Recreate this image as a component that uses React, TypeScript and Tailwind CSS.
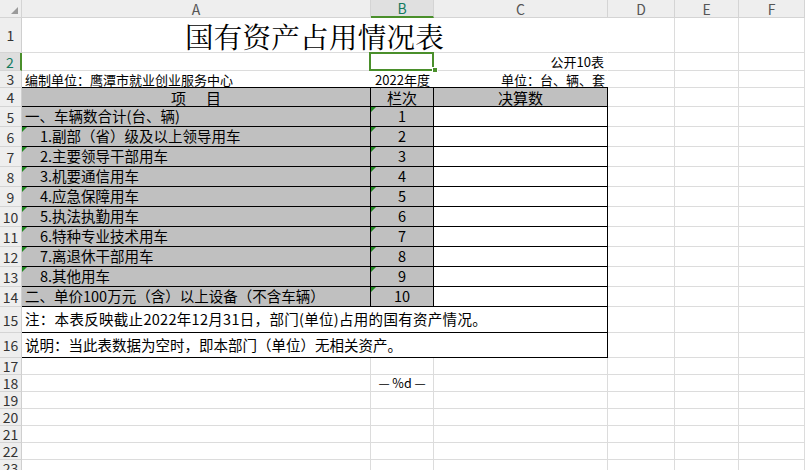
import React from "react";

const FONT = { fontFamily: '"Noto Sans CJK SC", "Liberation Sans", sans-serif' };
const SERIF = { fontFamily: '"Noto Serif CJK SC", "Noto Sans CJK SC", serif' };

const GRID = "border-r border-b border-[#dcdcdc]";
const BLACK = "border-r border-b border-black";

function Tri() {
  return (
    <span className="absolute left-0 top-0 w-0 h-0 border-t-[5px] border-r-[5px] border-t-[#1f8a1f] border-r-transparent" />
  );
}

function RowHead({ n, active }: { n: number; active?: boolean }) {
  return (
    <div
      className={`flex items-center justify-center text-[14px] leading-none border-b border-[#d4d4d4] ${
        active
          ? "bg-[#dedede] text-[#137a5e] border-r-2 border-r-[#4a8f2b]"
          : "bg-[#eeeeee] text-[#333] border-r border-r-[#cfcfcf]"
      }`}
    >
      {n}
    </div>
  );
}

function Blank() {
  return <div className={`bg-white ${GRID}`} />;
}

const items = [
  { t: "一、车辆数合计(台、辆)", n: "1", tri: false, indent: false },
  { t: "1.副部（省）级及以上领导用车", n: "2", tri: true, indent: true },
  { t: "2.主要领导干部用车", n: "3", tri: true, indent: true },
  { t: "3.机要通信用车", n: "4", tri: true, indent: true },
  { t: "4.应急保障用车", n: "5", tri: true, indent: true },
  { t: "5.执法执勤用车", n: "6", tri: true, indent: true },
  { t: "6.特种专业技术用车", n: "7", tri: true, indent: true },
  { t: "7.离退休干部用车", n: "8", tri: true, indent: true },
  { t: "8.其他用车", n: "9", tri: true, indent: true },
  { t: "二、单价100万元（含）以上设备（不含车辆）", n: "10", tri: false, indent: false },
];

export default function App() {
  return (
    <div
      style={FONT}
      className="w-[805px] h-[470px] overflow-hidden bg-white text-black grid grid-cols-[22px_349px_63px_174px_67px_64px_66px] grid-rows-[18px_35px_18px_17px_19px_repeat(10,20px)_26px_25px_repeat(7,17px)]"
    >
      {/* column headers */}
      <div className="bg-[#eeeeee] border-r border-b border-[#d4d4d4] relative">
        <span className="absolute left-[11px] top-[7px] w-0 h-0 border-l-[7px] border-b-[7px] border-l-transparent border-b-[#9a9a9a]" />
      </div>
      {["A", "B", "C", "D", "E", "F"].map((c) => (
        <div
          key={c}
          className={`flex items-center justify-center text-[14px] leading-none ${
            c === "B"
              ? "bg-[#e0e0e0] text-[#137a5e] border-b-2 border-b-[#4a8f2b] border-r border-r-[#d4d4d4]"
              : "bg-[#eeeeee] text-[#555] border-r border-b border-[#d4d4d4]"
          }`}
        >
          {c}
        </div>
      ))}

      {/* row 1 */}
      <RowHead n={1} />
      <div className="col-span-3 flex items-center justify-center bg-white border-b border-[#dcdcdc] border-r border-r-white">
        <span style={SERIF} className="text-[28.5px] leading-none pt-[2px] tracking-[0.3px]">
          国有资产占用情况表
        </span>
      </div>
      <Blank />
      <Blank />
      <Blank />

      {/* row 2 */}
      <RowHead n={2} active />
      <div className="bg-white border-b border-[#dcdcdc]" />
      <div className="relative bg-white border-b border-[#dcdcdc]">
        <div className="absolute z-10 -left-[2px] -top-[1px] w-[65px] h-[19px] bg-[#4a8f2b] p-[2px]">
          <div className="w-full h-full bg-white" />
        </div>
        <span className="absolute z-20 -right-[4px] -bottom-[3px] w-[6px] h-[6px] bg-[#4a8f2b] border border-white" />
      </div>
      <div className="flex items-center justify-end pr-[3px] text-[13px] leading-none bg-white border-b border-[#dcdcdc] border-r border-r-white">
        公开10表
      </div>
      <Blank />
      <Blank />
      <Blank />

      {/* row 3 */}
      <RowHead n={3} />
      <div className="flex items-end pb-[1px] pl-[3px] text-[13px] leading-none bg-white border-b border-black">
        编制单位：鹰潭市就业创业服务中心
      </div>
      <div className="flex items-end pb-[1px] justify-center text-[13px] leading-none bg-white border-b border-black">
        2022年度
      </div>
      <div className="flex items-end pb-[1px] justify-end pr-[3px] text-[13px] leading-none bg-white border-b border-black">
        单位：台、辆、套
      </div>
      <Blank />
      <Blank />
      <Blank />

      {/* row 4 */}
      <RowHead n={4} />
      <div className={`flex items-center justify-center gap-[20px] text-[15px] leading-none bg-[#c0c0c0] ${BLACK}`}>
        <span>项</span>
        <span>目</span>
      </div>
      <div className={`flex items-center justify-center text-[15px] leading-none bg-[#c0c0c0] ${BLACK}`}>栏次</div>
      <div className={`flex items-center justify-center text-[15px] leading-none bg-[#c0c0c0] ${BLACK}`}>决算数</div>
      <Blank />
      <Blank />
      <Blank />

      {/* rows 5-14 */}
      {items.map((it, i) => (
        <React.Fragment key={it.n}>
          <RowHead n={5 + i} />
          <div
            className={`relative flex items-center text-[14.5px] leading-none bg-[#c0c0c0] ${BLACK} ${
              it.indent ? "pl-[18px]" : "pl-[3px]"
            }`}
          >
            {it.tri && <Tri />}
            {it.t}
          </div>
          <div className={`relative flex items-center justify-center text-[14.5px] leading-none bg-[#c0c0c0] ${BLACK}`}>
            <Tri />
            {it.n}
          </div>
          <div className={`bg-white ${BLACK}`} />
          <Blank />
          <Blank />
          <Blank />
        </React.Fragment>
      ))}

      {/* row 15 */}
      <RowHead n={15} />
      <div className={`col-span-3 flex items-center pl-[3px] text-[14.5px] tracking-[0.3px] leading-none bg-white ${BLACK}`}>
        注：本表反映截止2022年12月31日，部门(单位)占用的国有资产情况。
      </div>
      <Blank />
      <Blank />
      <Blank />

      {/* row 16 */}
      <RowHead n={16} />
      <div className={`col-span-3 flex items-center pl-[3px] text-[14.5px] leading-none bg-white ${BLACK}`}>
        说明：当此表数据为空时，即本部门（单位）无相关资产。
      </div>
      <Blank />
      <Blank />
      <Blank />

      {/* rows 17-23 */}
      {[17, 18, 19, 20, 21, 22, 23].map((r) => (
        <React.Fragment key={r}>
          <RowHead n={r} />
          <Blank />
          <div className={`flex items-center justify-center text-[12.5px] leading-none bg-white ${GRID}`}>
            {r === 18 ? "— %d —" : ""}
          </div>
          <Blank />
          <Blank />
          <Blank />
          <Blank />
        </React.Fragment>
      ))}
    </div>
  );
}
